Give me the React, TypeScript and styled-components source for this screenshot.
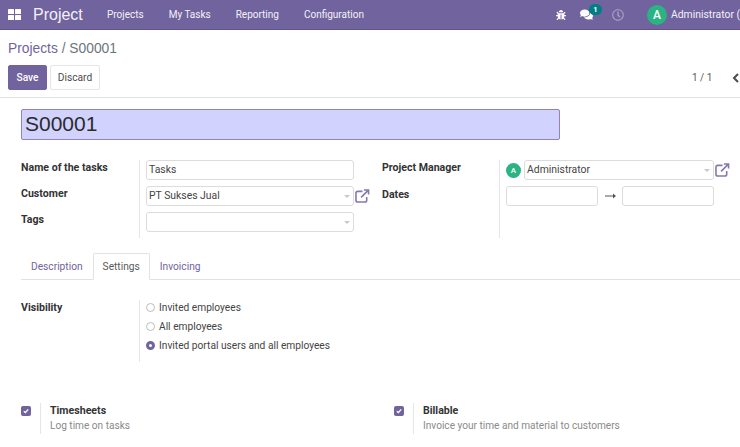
import React from "react";
import styled, { createGlobalStyle } from "styled-components";
import { FaBug, FaComments, FaRegClock } from "react-icons/fa";

const Global = createGlobalStyle`
  html, body { margin: 0; padding: 0; background: #fff; }
  body { font-family: Roboto, "Noto Sans", sans-serif; font-size: 10px; color: #4c4c4c; overflow: hidden; }
  * { box-sizing: border-box; }
`;

const Page = styled.div`
  width: 740px;
  height: 447px;
  overflow: hidden;
`;

const NavBar = styled.header`
  display: flex;
  align-items: center;
  height: 30px;
  width: 900px;
  background: #71639e;
  border-bottom: 1px solid #5f5389;
  color: #fff;
  padding-left: 8px;
`;

const AppsIcon = styled.svg`
  width: 13px;
  height: 11px;
  fill: #fff;
  flex: none;
`;

const Brand = styled.span`
  font-family: "Liberation Sans", sans-serif;
  font-size: 16px;
  margin-left: 12px;
  width: 74px;
  flex: none;
  color: #f3f1f8;
`;

const NavLink = styled.span`
  font-size: 10px;
  flex: none;
  margin-right: 25px;
  color: #f3f1f8;
`;

const NavRight = styled.div`
  display: flex;
  align-items: center;
  margin-left: 167px;
  flex: none;
`;

const NavIconSlot = styled.span<{ $w: number; $muted?: boolean }>`
  position: relative;
  display: inline-flex;
  align-items: center;
  width: ${(p) => p.$w}px;
  font-size: 10px;
  color: ${(p) => (p.$muted ? "#a9a2c4" : "#fff")};
`;

const Badge = styled.span`
  position: absolute;
  top: -4px;
  left: 9px;
  width: 13px;
  height: 11px;
  border-radius: 6px;
  background: #017e84;
  color: #fff;
  font-size: 7.5px;
  font-weight: 700;
  line-height: 11px;
  text-align: center;
`;

const Avatar = styled.span<{ $size: number; $font: number }>`
  display: inline-flex;
  align-items: center;
  justify-content: center;
  flex: none;
  width: ${(p) => p.$size}px;
  height: ${(p) => p.$size}px;
  border-radius: 50%;
  background: #2bb383;
  color: #fff;
  font-size: ${(p) => p.$font}px;
  font-weight: 500;
`;

const UserName = styled.span`
  font-size: 10.4px;
  margin-left: 4px;
  white-space: nowrap;
  color: #f3f1f8;
`;

const ControlPanel = styled.section`
  height: 68px;
  padding: 10px 8px 0;
  border-bottom: 1px solid #e2e2e2;
`;

const Breadcrumb = styled.div`
  font-family: "Liberation Sans", sans-serif;
  font-size: 13.8px;
  line-height: 17px;
  color: #71639e;
  span { color: #6c757d; }
`;

const ActionRow = styled.div`
  display: flex;
  align-items: center;
  margin-top: 8px;
  width: 760px;
`;

const Button = styled.button<{ $primary?: boolean }>`
  height: 25px;
  width: ${(p) => (p.$primary ? 39 : 50)}px;
  margin-right: 3px;
  padding: 0;
  border-radius: 2px;
  font-family: inherit;
  font-size: 10.2px;
  font-weight: ${(p) => (p.$primary ? 500 : 400)};
  background: ${(p) => (p.$primary ? "#71639e" : "#fff")};
  color: ${(p) => (p.$primary ? "#fff" : "#4c4c4c")};
  border: 1px solid ${(p) => (p.$primary ? "#71639e" : "#e6e6e6")};
`;

const Pager = styled.span`
  margin-left: 589px;
  font-size: 10px;
  color: #5a5a5a;
`;

const PagerArrow = styled.svg`
  width: 8px;
  height: 10px;
  margin-left: 20px;
  fill: none;
  stroke: #4c4c4c;
  stroke-width: 2;
`;

const Sheet = styled.main`
  padding: 11px 0 0 21px;
`;

const TitleInput = styled.div`
  width: 539px;
  height: 31px;
  background: #d2d2ff;
  border: 1px solid #8f84b3;
  border-radius: 2px;
  padding-left: 3px;
  font-family: "Liberation Sans", sans-serif;
  font-size: 21px;
  line-height: 27px;
  color: #2b2b2b;
`;

const Groups = styled.div`
  display: flex;
  margin-top: 20px;
  height: 78px;
`;

const Group = styled.div<{ $w: number }>`
  display: flex;
  flex: none;
  width: ${(p) => p.$w}px;
`;

const Labels = styled.div<{ $w?: number }>`
  flex: none;
  width: ${(p) => p.$w ?? 118}px;
  padding-top: 1px;
`;

const FieldLabel = styled.div<{ $h?: number }>`
  height: ${(p) => p.$h ?? 26}px;
  font-size: 10.6px;
  font-weight: 700;
  line-height: 14px;
  color: #333;
`;

const Fields = styled.div`
  flex: none;
  border-left: 1px solid #e6e6e6;
  padding-left: 6px;
  display: flex;
  flex-direction: column;
`;

const FieldRow = styled.div`
  display: flex;
  align-items: center;
  height: 26px;
  padding-bottom: 6px;
`;

const Input = styled.div<{ $w: number; $gap?: number }>`
  position: relative;
  flex: none;
  width: ${(p) => p.$w}px;
  height: 20px;
  margin-left: ${(p) => p.$gap ?? 0}px;
  border: 1px solid #dcdcdc;
  border-radius: 3px;
  padding-left: 2px;
  font-size: 10.4px;
  line-height: 18px;
  color: #444;
`;

const Caret = styled.span`
  position: absolute;
  right: 3px;
  top: 8px;
  width: 0;
  height: 0;
  border-left: 3px solid transparent;
  border-right: 3px solid transparent;
  border-top: 3px solid #c8c8c8;
`;

const LinkIcon = styled.svg`
  flex: none;
  width: 15px;
  height: 14px;
  margin-left: 1px;
  fill: none;
  stroke: #8578ad;
  stroke-width: 1.7;
`;

const DateArrow = styled.svg`
  flex: none;
  width: 24px;
  height: 8px;
  fill: #555;
`;

const Tabs = styled.nav`
  display: flex;
  margin-top: 15px;
  height: 27px;
  border-bottom: 1px solid #e2e2e2;
`;

const Tab = styled.span<{ $active?: boolean }>`
  flex: none;
  height: 27px;
  padding: 0 9px;
  font-size: 10.2px;
  line-height: 26px;
  color: ${(p) => (p.$active ? "#5a5a5a" : "#71639e")};
  ${(p) =>
    p.$active
      ? "background:#fff;border:1px solid #e2e2e2;border-bottom-color:#fff;border-radius:2px 2px 0 0;"
      : "border:1px solid transparent;"}
`;

const VisibilityGroup = styled.div`
  display: flex;
  margin-top: 20px;
  height: 62px;
`;

const RadioList = styled.div`
  flex: none;
  display: flex;
  flex-direction: column;
  gap: 5px;
  border-left: 1px solid #e6e6e6;
  padding-left: 6px;
`;

const RadioRow = styled.div`
  display: flex;
  align-items: center;
  height: 14px;
  font-size: 10.2px;
  color: #444;
`;

const Radio = styled.span<{ $on?: boolean }>`
  flex: none;
  width: 9px;
  height: 9px;
  margin-right: 4px;
  border-radius: 50%;
  background: #fff;
  border: ${(p) => (p.$on ? "3px solid #71639e" : "1px solid #bcbcbc")};
`;

const Settings = styled.div`
  display: flex;
  margin-top: 41px;
`;

const Setting = styled.div`
  display: flex;
  flex: none;
  width: 373px;
`;

const CheckBox = styled.span`
  display: flex;
  align-items: center;
  justify-content: center;
  flex: none;
  width: 10px;
  height: 10px;
  margin-top: 3px;
  border-radius: 2px;
  background: #71639e;
`;

const CheckMark = styled.svg`
  width: 6px;
  height: 6px;
  fill: none;
  stroke: #fff;
  stroke-width: 1.4;
`;

const SettingBody = styled.div`
  margin-left: 9px;
  height: 31px;
  border-left: 1px solid #e6e6e6;
  padding-left: 9px;
`;

const SettingTitle = styled.div`
  font-size: 10.6px;
  font-weight: 700;
  line-height: 15px;
  color: #333;
`;

const SettingHelp = styled.div`
  font-size: 10.1px;
  line-height: 16px;
  color: #8a8a8a;
`;

const External = () => (
  <LinkIcon viewBox="0 0 16 15">
    <path d="M12.5 8.5v3.5a2 2 0 0 1-2 2h-7.5a2 2 0 0 1-2-2v-7.5a2 2 0 0 1 2-2h5" />
    <path d="M6.5 9 14 1.5M9.5 1h5v5" />
  </LinkIcon>
);

const Check = () => (
  <CheckBox>
    <CheckMark viewBox="0 0 6 6">
      <path d="M0.8 3.2 2.4 4.6 5.2 1.4" />
    </CheckMark>
  </CheckBox>
);

export default function App() {
  return (
    <Page>
      <Global />
      <NavBar>
        <AppsIcon viewBox="0 0 13 11">
          <rect x="0" y="0" width="6" height="5" rx="0.6" />
          <rect x="7" y="0" width="6" height="5" rx="0.6" />
          <rect x="0" y="6" width="6" height="5" rx="0.6" />
          <rect x="7" y="6" width="6" height="5" rx="0.6" />
        </AppsIcon>
        <Brand>Project</Brand>
        <NavLink>Projects</NavLink>
        <NavLink>My Tasks</NavLink>
        <NavLink>Reporting</NavLink>
        <NavLink>Configuration</NavLink>
        <NavRight>
          <NavIconSlot $w={24}><FaBug /></NavIconSlot>
          <NavIconSlot $w={32}>
            <FaComments size={13} />
            <Badge>1</Badge>
          </NavIconSlot>
          <NavIconSlot $w={35} $muted><FaRegClock size={12} /></NavIconSlot>
          <Avatar $size={20} $font={12}>A</Avatar>
          <UserName>Administrator (public)</UserName>
        </NavRight>
      </NavBar>
      <ControlPanel>
        <Breadcrumb>Projects <span>/ S00001</span></Breadcrumb>
        <ActionRow>
          <Button $primary>Save</Button>
          <Button>Discard</Button>
          <Pager>1 / 1</Pager>
          <PagerArrow viewBox="0 0 8 10"><path d="M6 1 2 5l4 4" /></PagerArrow>
        </ActionRow>
      </ControlPanel>
      <Sheet>
        <TitleInput>S00001</TitleInput>
        <Groups>
          <Group $w={361}>
            <Labels>
              <FieldLabel>Name of the tasks</FieldLabel>
              <FieldLabel>Customer</FieldLabel>
              <FieldLabel>Tags</FieldLabel>
            </Labels>
            <Fields>
              <FieldRow><Input $w={208}>Tasks</Input></FieldRow>
              <FieldRow><Input $w={208}>PT Sukses Jual<Caret /></Input><External /></FieldRow>
              <FieldRow><Input $w={208}><Caret /></Input></FieldRow>
            </Fields>
          </Group>
          <Group $w={358}>
            <Labels $w={117}>
              <FieldLabel $h={27}>Project Manager</FieldLabel>
              <FieldLabel>Dates</FieldLabel>
            </Labels>
            <Fields>
              <FieldRow>
                <Avatar $size={15} $font={8}>A</Avatar>
                <Input $w={190} $gap={3}>Administrator<Caret /></Input>
                <External />
              </FieldRow>
              <FieldRow>
                <Input $w={92} />
                <DateArrow viewBox="0 0 24 8"><path d="M7 3.4h8V1.6L18 4l-3 2.4V4.6H7z" /></DateArrow>
                <Input $w={92} />
              </FieldRow>
            </Fields>
          </Group>
        </Groups>
        <Tabs>
          <Tab>Description</Tab>
          <Tab $active>Settings</Tab>
          <Tab>Invoicing</Tab>
        </Tabs>
        <VisibilityGroup>
          <Labels><FieldLabel>Visibility</FieldLabel></Labels>
          <RadioList>
            <RadioRow><Radio />Invited employees</RadioRow>
            <RadioRow><Radio />All employees</RadioRow>
            <RadioRow><Radio $on />Invited portal users and all employees</RadioRow>
          </RadioList>
        </VisibilityGroup>
        <Settings>
          <Setting>
            <Check />
            <SettingBody>
              <SettingTitle>Timesheets</SettingTitle>
              <SettingHelp>Log time on tasks</SettingHelp>
            </SettingBody>
          </Setting>
          <Setting>
            <Check />
            <SettingBody>
              <SettingTitle>Billable</SettingTitle>
              <SettingHelp>Invoice your time and material to customers</SettingHelp>
            </SettingBody>
          </Setting>
        </Settings>
      </Sheet>
    </Page>
  );
}
